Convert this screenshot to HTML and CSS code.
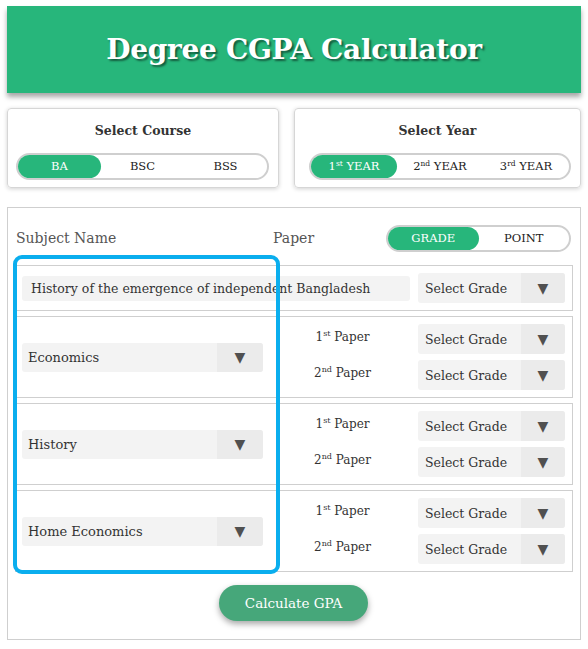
FILE: index.html
```html
<!DOCTYPE html>
<html>
<head>
<meta charset="utf-8">
<link rel="stylesheet" href="styles.css">
</head>
<body>
<div class="page">
  <header class="banner"><h1>Degree CGPA Calculator</h1></header>

  <div class="selectors">
    <div class="card course">
      <div class="card-title">Select Course</div>
      <div class="toggle t3">
        <span class="opt active">BA</span>
        <span class="opt">BSC</span>
        <span class="opt">BSS</span>
      </div>
    </div>
    <div class="card year">
      <div class="card-title">Select Year</div>
      <div class="toggle t3">
        <span class="opt active">1<sup>st</sup> YEAR</span>
        <span class="opt">2<sup>nd</sup> YEAR</span>
        <span class="opt">3<sup>rd</sup> YEAR</span>
      </div>
    </div>
  </div>

  <div class="main">
    <div class="main-head">
      <span class="h-subject">Subject Name</span>
      <span class="h-paper">Paper</span>
      <div class="toggle t2">
        <span class="opt active">GRADE</span>
        <span class="opt">POINT</span>
      </div>
    </div>

    <div class="row single">
      <div class="subject-text">History of the emergence of independent Bangladesh</div>
      <div class="grade"><span class="g-label">Select Grade</span><span class="g-arrow">▼</span></div>
    </div>

    <div class="row double">
      <div class="subject-select"><span class="s-label">Economics</span><span class="s-arrow">▼</span></div>
      <div class="papers">
        <div class="paper-line"><span class="paper">1<sup>st</sup> Paper</span><div class="grade"><span class="g-label">Select Grade</span><span class="g-arrow">▼</span></div></div>
        <div class="paper-line"><span class="paper">2<sup>nd</sup> Paper</span><div class="grade"><span class="g-label">Select Grade</span><span class="g-arrow">▼</span></div></div>
      </div>
    </div>

    <div class="row double">
      <div class="subject-select"><span class="s-label">History</span><span class="s-arrow">▼</span></div>
      <div class="papers">
        <div class="paper-line"><span class="paper">1<sup>st</sup> Paper</span><div class="grade"><span class="g-label">Select Grade</span><span class="g-arrow">▼</span></div></div>
        <div class="paper-line"><span class="paper">2<sup>nd</sup> Paper</span><div class="grade"><span class="g-label">Select Grade</span><span class="g-arrow">▼</span></div></div>
      </div>
    </div>

    <div class="row double">
      <div class="subject-select"><span class="s-label">Home Economics</span><span class="s-arrow">▼</span></div>
      <div class="papers">
        <div class="paper-line"><span class="paper">1<sup>st</sup> Paper</span><div class="grade"><span class="g-label">Select Grade</span><span class="g-arrow">▼</span></div></div>
        <div class="paper-line"><span class="paper">2<sup>nd</sup> Paper</span><div class="grade"><span class="g-label">Select Grade</span><span class="g-arrow">▼</span></div></div>
      </div>
    </div>

    <div class="actions"><button class="calc">Calculate GPA</button></div>

    <div class="highlight"></div>
  </div>
</div>
</body>
</html>
```

FILE: styles.css
```css
* { box-sizing: border-box; }
html, body { margin: 0; padding: 0; background: #fff; }
body { font-family: "DejaVu Serif", "Liberation Serif", serif; color: #333; }
.page { padding: 6px 7px 0 7px; width: 588px; }

.banner {
  background: #27b67b;
  height: 87px;
  display: flex;
  align-items: center;
  justify-content: center;
  box-shadow: 0 4px 5px rgba(0,0,0,0.35);
}
.banner h1 {
  margin: 0;
  color: #fff;
  font-size: 28px;
  font-weight: bold;
  letter-spacing: -0.3px;
  text-shadow: 2px 2px 2px rgba(0,0,0,0.5);
}

.selectors {
  display: grid;
  grid-template-columns: 272px 287px;
  column-gap: 15px;
  margin-top: 15px;
}
.card {
  border: 1px solid #d6d6d6;
  border-radius: 4px;
  box-shadow: 0 1px 4px rgba(0,0,0,0.18);
  height: 80px;
  padding-top: 13px;
}
.card-title {
  text-align: center;
  font-size: 12.5px;
  font-weight: bold;
  color: #333;
  height: 18px;
  line-height: 18px;
}
.course .toggle { margin: 13px 9px 0 8px; }
.year .toggle { margin: 13px 9px 0 14px; }

.toggle {
  display: flex;
  border: 2px solid #cfcfcf;
  border-radius: 14px;
  height: 27px;
  background: #fff;
}
.toggle .opt {
  flex: 1;
  display: block;
  text-align: center;
  line-height: 23px;
  font-size: 11.5px;
  color: #222;
  border-radius: 13px;
  white-space: nowrap;
}
.toggle .opt.active { background: #27b67b; color: #fff; }
.toggle sup { font-size: 7.5px; line-height: 0; vertical-align: 4px; }

.main {
  position: relative;
  margin-top: 19px;
  border: 1px solid #cfcfcf;
  height: 433px;
  padding: 16px 7px 0 7px;
}
.main-head {
  display: flex;
  align-items: center;
  height: 28px;
  padding-left: 1px;
  margin-bottom: 13px;
}
.h-subject { font-size: 14px; color: #555; width: 257px; }
.h-paper { font-size: 14px; color: #555; flex: 1; }
.t2 { width: 185px; margin-right: 2px; }

.row {
  border: 1px solid #cfcfcf;
  display: flex;
  align-items: center;
  padding: 0 7px 0 6px;
  margin-bottom: 5px;
}
.row.single { height: 46px; justify-content: space-between; }
.row.double { height: 82px; }

.subject-text {
  background: #f3f3f3;
  border-radius: 3px;
  width: 388px;
  height: 25px;
  line-height: 25px;
  padding-left: 9px;
  font-size: 12.5px;
  color: #333;
  white-space: nowrap;
  overflow: hidden;
}

.grade, .subject-select {
  display: flex;
  background: #f3f3f3;
  border-radius: 3px;
  overflow: hidden;
  height: 30px;
}
.grade { width: 147px; }
.g-label, .s-label {
  flex: 1;
  display: flex;
  align-items: center;
  font-size: 13px;
  color: #333;
  white-space: nowrap;
}
.g-label { padding-left: 7px; font-size: 12.5px; }
.g-arrow, .s-arrow {
  width: 44px;
  background: #ebebeb;
  display: flex;
  align-items: center;
  justify-content: center;
  color: #505050;
  font-size: 14px;
}
.subject-select { width: 241px; height: 29px; }
.s-label { padding-left: 6px; }
.s-arrow { width: 46px; }

.papers {
  flex: 1;
  display: flex;
  flex-direction: column;
  gap: 6px;
}
.paper-line { display: flex; align-items: center; }
.paper {
  flex: 1;
  text-align: center;
  font-size: 12px;
  color: #333;
  position: relative;
  top: -2px;
  left: 2px;
}
.paper sup { font-size: 8px; line-height: 0; }

.actions {
  display: flex;
  justify-content: center;
  margin-top: 13px;
}
.calc {
  width: 149px;
  height: 36px;
  border: none;
  border-radius: 18px;
  background: #46a77a;
  color: #fff;
  font-family: inherit;
  font-size: 13.5px;
  box-shadow: 0 3px 6px rgba(0,0,0,0.35);
  margin-left: -1px;
}

.highlight {
  position: absolute;
  left: 5px;
  top: 47px;
  width: 267px;
  height: 319px;
  border: 4px solid #0aaeee;
  border-radius: 9px;
  pointer-events: none;
}
```
